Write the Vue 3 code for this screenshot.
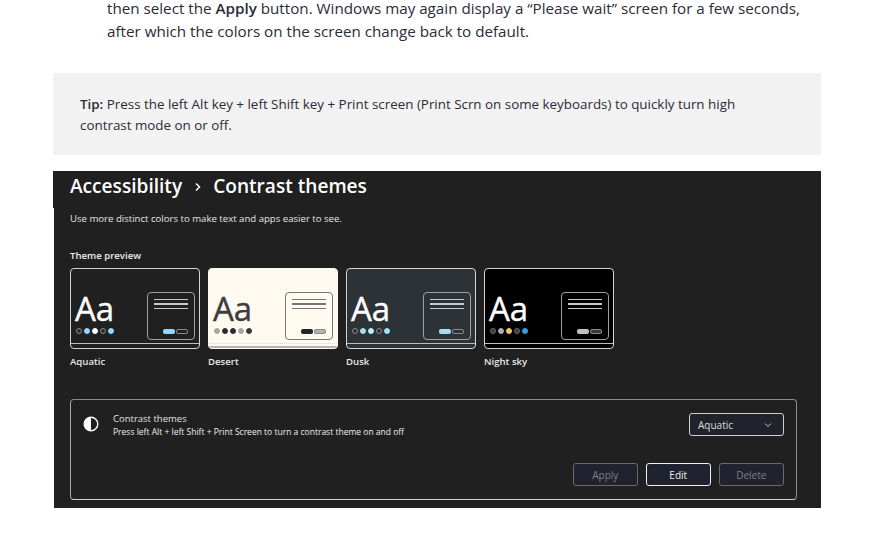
<script setup>
const themes = [
  {
    name: "Aquatic",
    cls: "aquatic",
    ring: "#8a8a8a",
    dots: ["#2a2a2a", "#8fd8ff", "#ffffff", "#2a2a2a", "#8fd8ff"],
    btn: ["#8fd8ff", "transparent"],
  },
  {
    name: "Desert",
    cls: "desert",
    ring: "#a8a6a2",
    dots: ["#a8a6a2", "#2b2b2b", "#2b2b2b", "#a8a6a2", "#3a3a3a"],
    btn: ["#23232b", "#b5b3ae"],
  },
  {
    name: "Dusk",
    cls: "dusk",
    ring: "#8a8a8a",
    dots: ["#2d3236", "#a9dcf2", "#b5f0fb", "#2d3236", "#9fe0fb"],
    btn: ["#a9dcf2", "transparent"],
  },
  {
    name: "Night sky",
    cls: "night",
    ring: "#6a6a72",
    dots: ["#3a3a42", "#b0b0b0", "#f1c27a", "#3a3a42", "#3f9be0"],
    btn: ["#c0c0c0", "#3a3a42"],
  },
];

// first and fourth dots are outlined, the others are plain fills
function dotStyle(t, d, i) {
  return { background: d, borderColor: i === 0 || i === 3 ? t.ring : d };
}
</script>

<template>
  <div class="page">
    <p class="intro">
      then select the <b>Apply</b> button. Windows may again display a “Please wait” screen for a few seconds,
      after which the colors on the screen change back to default.
    </p>

    <div class="tip">
      <b>Tip:</b> Press the left Alt key + left Shift key + Print screen (Print Scrn on some keyboards) to quickly turn high<br />
      contrast mode on or off.
    </div>

    <div class="shot">
      <h1 class="crumb">
        <span>Accessibility</span>
        <svg class="crumbArrow" width="8" height="10" viewBox="0 0 8 10">
          <path d="M2 1.5 L5.5 5 L2 8.5" fill="none" stroke="#fff" stroke-width="1.5" />
        </svg>
        <span>Contrast themes</span>
      </h1>
      <div class="sub">Use more distinct colors to make text and apps easier to see.</div>
      <div class="previewLabel">Theme preview</div>

      <div class="themes">
        <div v-for="t in themes" :key="t.name" class="theme">
          <div class="card" :class="t.cls">
            <div class="cardMain">
              <div class="left">
                <div class="aa">Aa</div>
                <div class="dots">
                  <i v-for="(d, i) in t.dots" :key="i" class="dot" :style="dotStyle(t, d, i)"></i>
                </div>
              </div>
              <div class="mini">
                <div class="lines"><i></i><i></i><i></i></div>
                <div class="miniBtns">
                  <i class="miniBtn" :style="{ background: t.btn[0] }"></i>
                  <i class="miniBtn second" :style="{ background: t.btn[1] }"></i>
                </div>
              </div>
            </div>
            <div class="cardFoot"></div>
          </div>
          <div class="themeName">{{ t.name }}</div>
        </div>
      </div>

      <div class="panel">
        <div class="panelTop">
          <svg class="contrastIcon" width="16" height="16" viewBox="0 0 16 16">
            <circle cx="8" cy="8" r="6.8" fill="none" stroke="#fff" stroke-width="1.4" />
            <path d="M8 1.2 A6.8 6.8 0 0 0 8 14.8 Z" fill="#fff" />
          </svg>
          <div class="panelText">
            <div class="panelTitle">Contrast themes</div>
            <div class="panelDesc">Press left Alt + left Shift + Print Screen to turn a contrast theme on and off</div>
          </div>
          <div class="select">
            <span>Aquatic</span>
            <svg width="8" height="6" viewBox="0 0 8 6">
              <path d="M1 1.5 L4 4.5 L7 1.5" fill="none" stroke="#ccc" stroke-width="1" />
            </svg>
          </div>
        </div>
        <div class="actions">
          <button class="btn off">Apply</button>
          <button class="btn on">Edit</button>
          <button class="btn off">Delete</button>
        </div>
      </div>
    </div>
  </div>
</template>

<style scoped>
.page {
  width: 887px;
  height: 551px;
  overflow: hidden;
  background: #fff;
  font-family: "Open Sans", "Noto Sans", sans-serif;
}
.intro {
  margin: -3px 0 0 107px;
  width: 700px;
  font-size: 15.2px;
  line-height: 23px;
  color: #2b2b38;
}
.intro b { font-weight: 600; }
.tip {
  margin: 30px 0 0 53px;
  width: 768px;
  height: 82px;
  box-sizing: border-box;
  padding: 21px 27px;
  background: #f2f2f2;
  font-size: 13.38px;
  line-height: 21px;
  color: #2b2b38;
}
.tip b { font-weight: 600; }
.shot {
  position: relative;
  margin: 16px 0 0 53px;
  width: 768px;
  height: 337px;
  box-sizing: border-box;
  padding: 0 24px 0 17px;
  background: #202020;
  color: #fff;
  display: flex;
  flex-direction: column;
}
/* the pasted image leaves a 1px white sliver on the left */
.shot::before {
  content: "";
  position: absolute;
  left: 0;
  top: 37px;
  bottom: 0;
  width: 1px;
  background: #fff;
}
.crumb {
  margin: 3px 0 0;
  display: flex;
  align-items: center;
  gap: 11.5px;
  font-size: 19.1px;
  line-height: 25px;
  font-weight: 600;
}
.sub {
  margin-top: 13px;
  font-size: 9.6px;
  line-height: 14px;
  color: #e4e4e4;
}
.previewLabel {
  margin-top: 23px;
  font-size: 9.6px;
  line-height: 14px;
  font-weight: 600;
  color: #eee;
}
.themes {
  margin-top: 5px;
  display: flex;
  gap: 8px;
}
.theme { width: 130px; }
.card {
  height: 81px;
  box-sizing: border-box;
  border: 1px solid #d5d5d5;
  border-radius: 4px;
  display: flex;
  flex-direction: column;
  overflow: hidden;
}
.cardMain {
  flex: 1;
  display: flex;
  justify-content: space-between;
  align-items: flex-end;
  padding: 0 4px 3px 4px;
}
.cardFoot {
  height: 4px;
  border-top: 1px solid #bdbdbd;
}
.left { padding-bottom: 6px; }
.aa {
  font-size: 33px;
  line-height: 34px;
  font-weight: 500;
  -webkit-text-stroke: 0.4px currentColor;
  margin-bottom: 2px;
}
.dots { display: flex; gap: 2px; padding-left: 1px; }
.dot {
  width: 6px;
  height: 6px;
  box-sizing: border-box;
  border: 1px solid;
  border-radius: 50%;
}
.mini {
  width: 48px;
  height: 48px;
  box-sizing: border-box;
  border: 1px solid #a0a0a0;
  border-radius: 4px;
  padding: 6px 6px 5px 6px;
  display: flex;
  flex-direction: column;
  justify-content: space-between;
}
.lines { display: flex; flex-direction: column; gap: 3px; }
.lines i { display: block; height: 1.4px; background: #c9c9c9; }
.miniBtns { display: flex; justify-content: flex-end; gap: 1px; }
.miniBtn {
  width: 12px;
  height: 5px;
  border-radius: 2px;
}
.miniBtn.second { border: 1px solid #8a8a8a; box-sizing: border-box; }
.themeName {
  margin-top: 6px;
  font-size: 9.6px;
  line-height: 14px;
  font-weight: 600;
  color: #e8e8e8;
}
.aquatic { background: #202020; }
.aquatic .aa { color: #fff; }
.desert { background: #fffaef; border-color: #fffaef; }
.desert .aa { color: #3d3d3d; }
.desert .mini { border-color: #77757a; }
.desert .lines i { background: #77757a; }
.desert .cardFoot {
  height: 2px;
  border-top: 1px dotted #d8d5cc;
  border-bottom: 2px solid #b5b3ae;
}
.dusk { background: #2d3236; }
.dusk .aa { color: #fff; }
.night { background: #000; }
.night .aa { color: #fff; }
.panel {
  margin-top: 30px;
  height: 101px;
  box-sizing: border-box;
  border: 1px solid #8a8a8a;
  border-bottom-color: #cfcfcf;
  border-left-color: #a8a8a8;
  border-radius: 4px;
  padding: 13px 12px 13px 12px;
  display: flex;
  flex-direction: column;
  justify-content: space-between;
}
.panelTop { display: flex; align-items: flex-start; }
.contrastIcon { margin: 3px 14px 0 0; }
.panelText { flex: 1; }
.panelTitle {
  font-size: 9.5px;
  line-height: 12px;
  color: #e0e0e0;
}
.panelDesc {
  margin-top: 1px;
  font-size: 8.5px;
  line-height: 12px;
  color: #eee;
}
.select {
  width: 95px;
  height: 23px;
  box-sizing: border-box;
  border: 1px solid #d0d0d0;
  border-radius: 3px;
  background: #20232b;
  padding: 0 11px 0 8px;
  display: flex;
  align-items: center;
  justify-content: space-between;
  font-size: 10px;
  color: #ddd;
}
.actions {
  display: flex;
  justify-content: flex-end;
  gap: 7.5px;
}
.btn {
  width: 65.5px;
  height: 23px;
  padding: 0;
  border-radius: 3px;
  background: #20232f;
  font-family: inherit;
  font-size: 10px;
}
.btn.off { border: 1px solid #6b6b6b; color: #808080; }
.btn.on { border: 1px solid #f0f0f0; color: #eee; }
</style>

<style>
html, body { margin: 0; background: #fff; }
</style>
